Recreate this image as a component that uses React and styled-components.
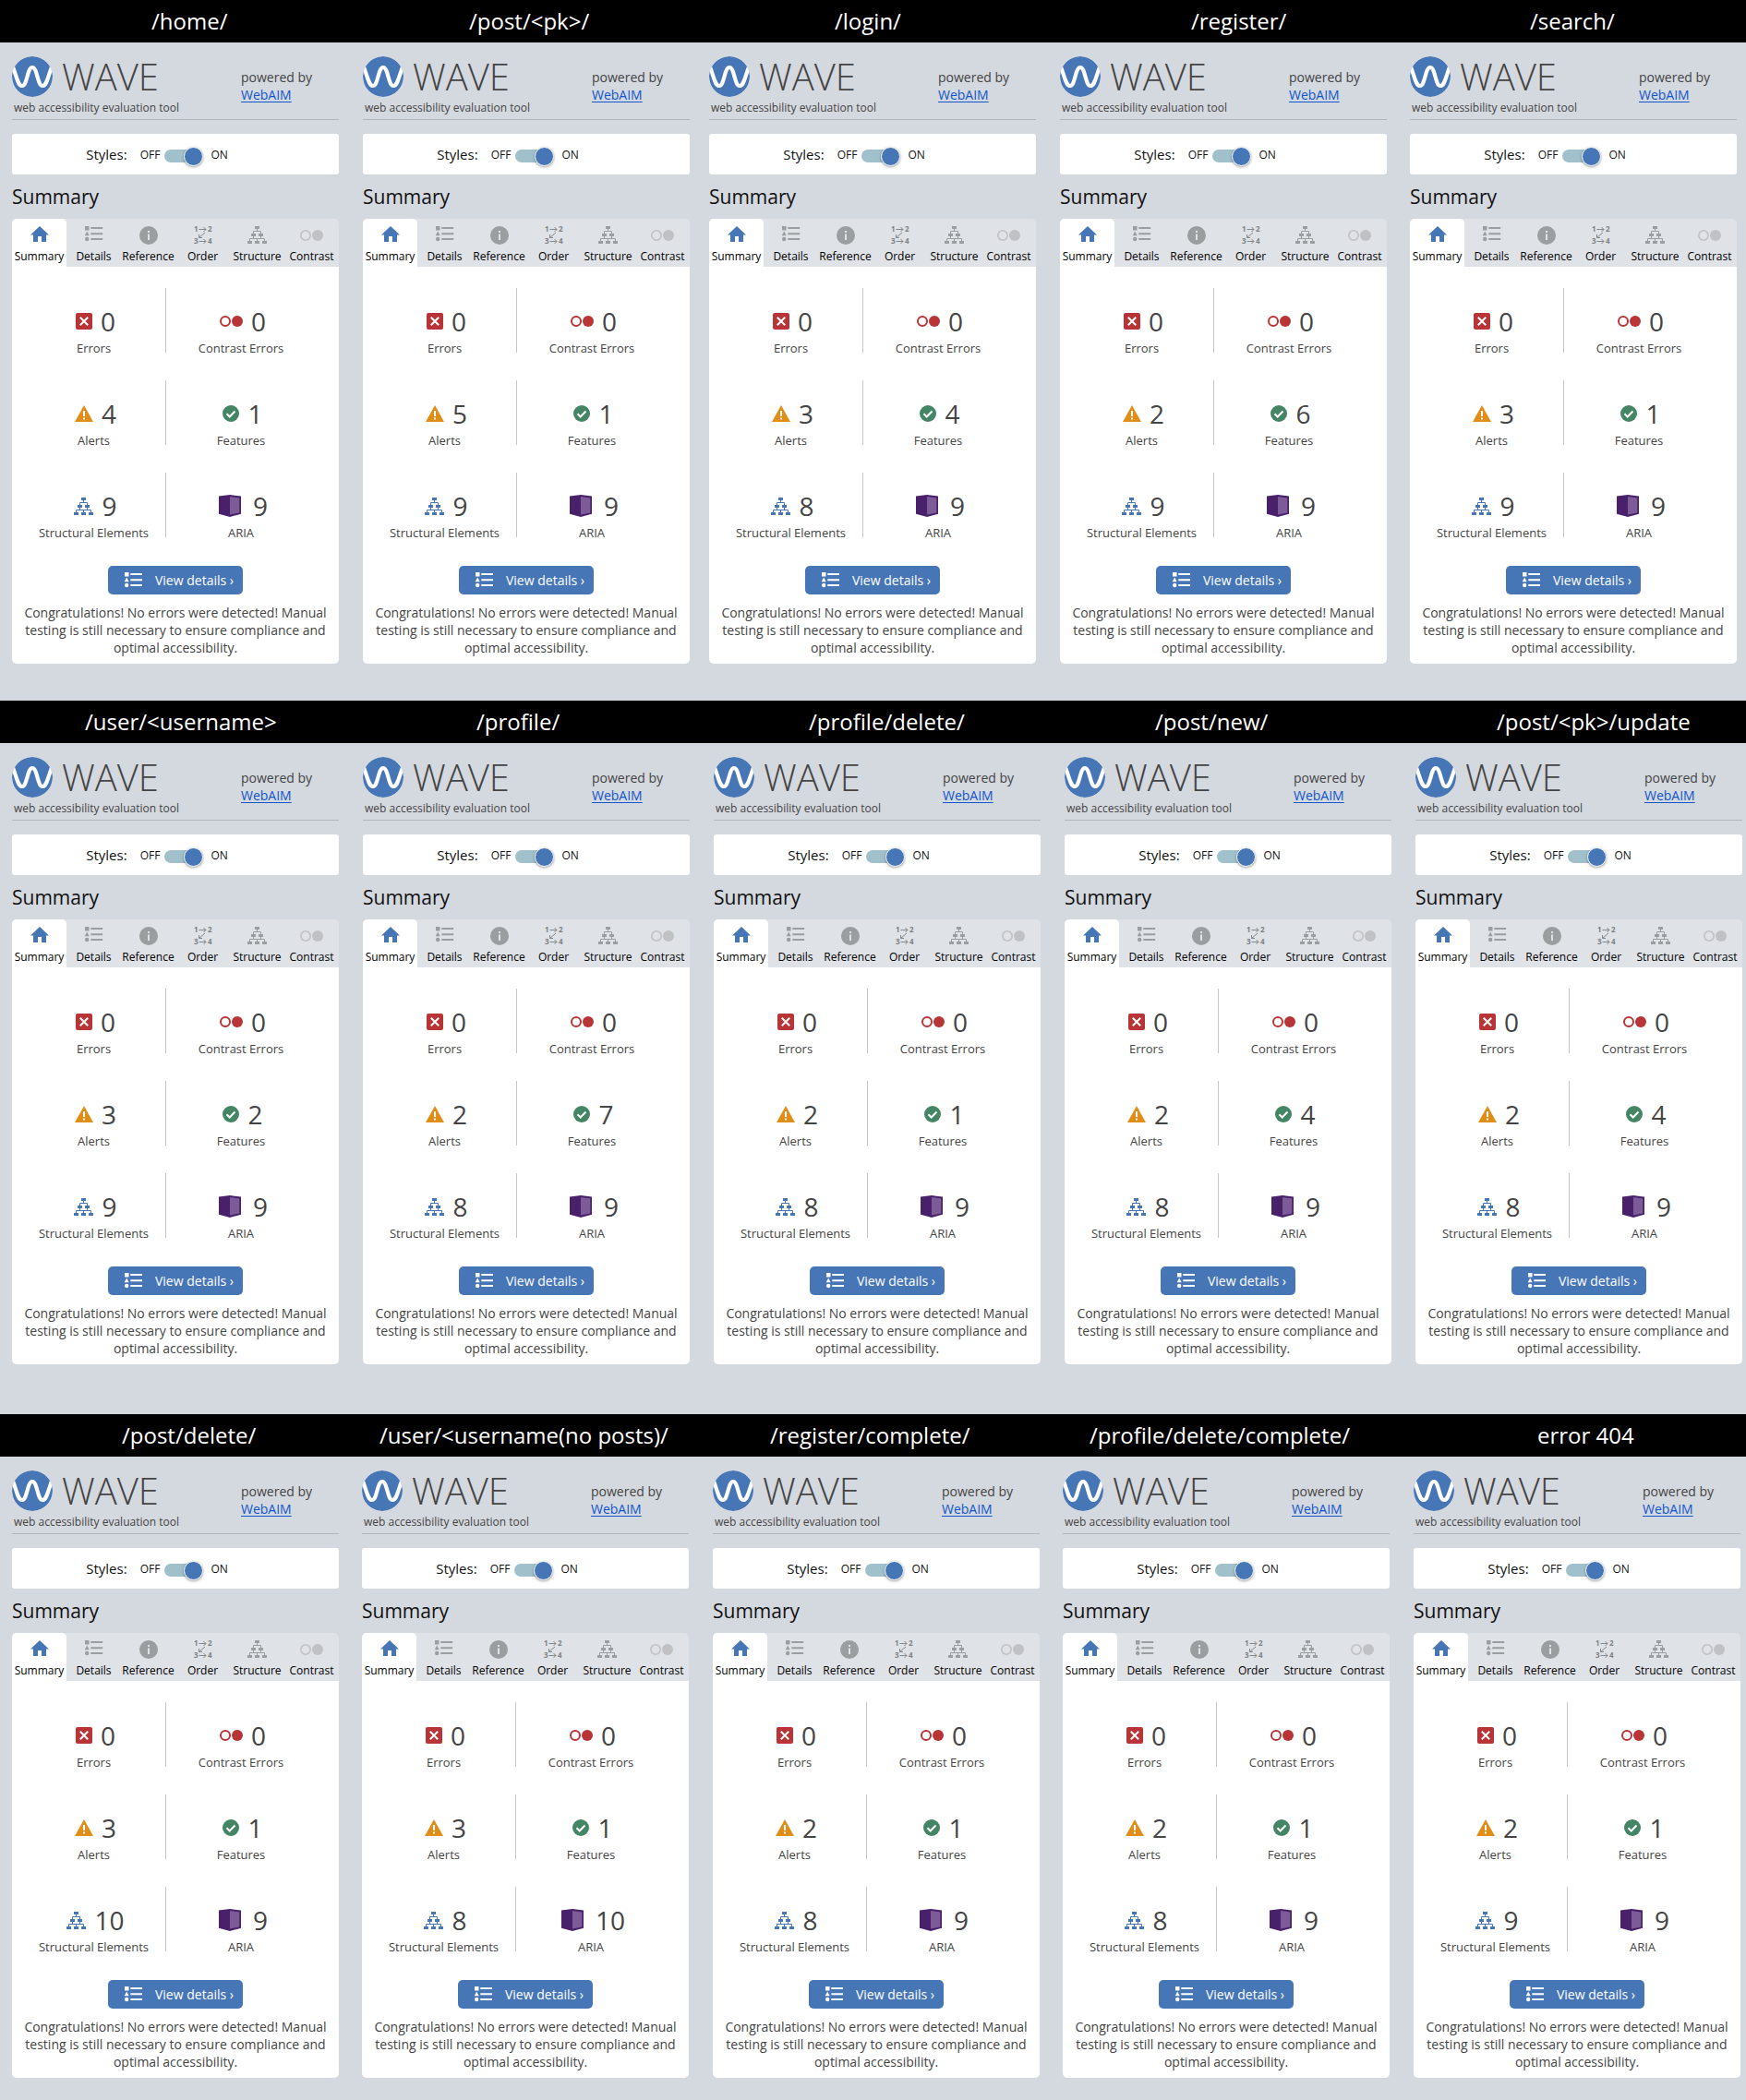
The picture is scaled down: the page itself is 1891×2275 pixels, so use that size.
import React, { useId } from "react";
import styled, { createGlobalStyle, css } from "styled-components";

const color = {
  page: "#d4d8df",
  tabBar: "#dfe2e6",
  blue: "#4776b6",
  text: "#444444",
  grey: "#9b9ea1",
  paleGrey: "#bfc1c5",
  red: "#b93436",
  orange: "#e18e18",
  green: "#438564",
  purple: "#49216b",
  lilac: "#7d5b99",
};

const GlobalStyle = createGlobalStyle`
  *, *::before, *::after { box-sizing: border-box; }
  body {
    margin: 0;
    background: ${color.page};
    color: ${color.text};
    font-family: "Open Sans", "Noto Sans", sans-serif;
  }
`;

/* ---------- layout ---------- */

const Band = styled.section`
  padding-bottom: ${(p) => p.$space}px;
`;

const RouteBar = styled.header`
  display: grid;
  grid-template-columns: ${(p) => p.$tracks.map((t) => `${t}fr`).join(" ")};
  height: 46px;
  background: #000;
`;

const RouteName = styled.h2`
  grid-column: ${(p) => p.$column};
  margin: 0;
  color: #fff;
  font-size: 24px;
  font-weight: 400;
  line-height: 46px;
  white-space: nowrap;
`;

const Strip = styled.div`
  display: flex;
  padding: 15px ${(p) => p.$end}px 0 13px;
`;

const Report = styled.article`
  flex: 1 1 0;
  min-width: 0;
  margin-left: ${(p) => p.$gap}px;
`;

/* ---------- report header ---------- */

const ReportHeader = styled.div`
  display: flex;
  padding-bottom: 4px;
  border-bottom: 1px solid #b3b6b8;
`;

const Brand = styled.div`
  flex: 0 0 248px;
`;

const BrandRow = styled.div`
  display: flex;
  gap: 10px;
  height: 44px;
`;

const BrandName = styled.span`
  font-size: 40px;
  font-weight: 300;
  line-height: 44px;
`;

const Tagline = styled.p`
  margin: 4px 0 0 2px;
  font-size: 12px;
  line-height: 16px;
`;

const Powered = styled.p`
  margin: 13px 0 0;
  font-size: 14px;
  line-height: 19px;
`;

const PoweredLink = styled.a`
  display: block;
  color: #1155cc;
  text-underline-offset: 2px;
`;

/* ---------- styles switch ---------- */

const StylesBar = styled.div`
  display: flex;
  align-items: center;
  justify-content: center;
  height: 44px;
  margin-top: 15px;
  padding-right: 40px;
  border-radius: 3px;
  background: #fff;
  color: #111;
`;

const StylesLabel = styled.label`
  margin-right: 14px;
  font-size: 15px;
`;

const StateText = styled.span`
  font-size: 12px;
`;

const Toggle = styled.input`
  appearance: none;
  display: flex;
  align-items: center;
  justify-content: flex-end;
  width: 42px;
  height: 14px;
  margin: 4px 8px 0 5px;
  border-radius: 7px;
  background: #a0c1cb;

  &::before {
    content: "";
    flex: none;
    width: 21px;
    height: 21px;
    border: 1px solid #fff;
    border-radius: 50%;
    background: ${color.blue};
    box-shadow: 0 1px 3px rgba(0, 0, 0, 0.4);
  }

  &:not(:checked) {
    justify-content: flex-start;
  }
`;

const Heading = styled.h3`
  margin: 10px 0;
  color: #111;
  font-size: 21px;
  font-weight: 400;
  line-height: 28px;
`;

/* ---------- tabs ---------- */

const Tabs = styled.div`
  display: grid;
  grid-template-columns: repeat(6, 1fr);
  height: 52px;
  border-radius: 5px 5px 0 0;
  background: ${color.tabBar};
`;

const Tab = styled.button`
  display: flex;
  flex-direction: column;
  align-items: center;
  gap: 5px;
  min-width: 0;
  padding: 8px 0 0;
  border: 0;
  border-radius: 5px 5px 0 0;
  background: transparent;
  color: #000;
  font: inherit;
  font-size: 12px;
  line-height: 16px;
  ${(p) =>
    p.$active &&
    css`
      background: #fff;
    `}
`;

const TabDrawing = styled.svg`
  flex: none;
  overflow: visible;
`;

const OrderDigits = styled.g`
  font-family: "Open Sans", sans-serif;
  font-size: 8px;
  font-weight: 700;
`;

/* ---------- panel ---------- */

const Panel = styled.div`
  display: flex;
  flex-direction: column;
  align-items: center;
  padding: 23px 0 8px;
  border-radius: 0 0 5px 5px;
  background: #fff;
`;

const Counts = styled.div`
  display: grid;
  grid-template-columns: 167fr 187fr;
  row-gap: 26px;
  width: 100%;
`;

const Count = styled.div`
  padding-top: 17px;
  text-align: center;

  &:nth-child(odd) {
    padding-left: 10px;
    background: linear-gradient(#c6c6c6, #c6c6c6) right top / 1px 70px no-repeat;
  }

  &:nth-child(even) {
    padding-right: 25px;
  }
`;

const CountRow = styled.div`
  display: flex;
  align-items: center;
  justify-content: center;
  gap: 9px;
  height: 38px;
  padding-left: 4px;
`;

const CountValue = styled.span`
  font-size: 28px;
  line-height: 38px;
`;

const CountLabel = styled.div`
  margin-top: 1px;
  font-size: 13px;
  line-height: 18px;
`;

const DetailsButton = styled.button`
  display: flex;
  align-items: center;
  gap: 14px;
  height: 31px;
  margin: 27px 0 10px;
  padding: 0 10px 0 17px;
  border: 0;
  border-radius: 5px;
  background: ${color.blue};
  color: #fff;
  font: inherit;
  font-size: 14px;
  line-height: 19px;
`;

const Message = styled.p`
  margin: 0;
  padding: 0 12px;
  font-size: 14px;
  line-height: 19px;
  text-align: center;
`;

/* ---------- drawings ---------- */

const Logo = () => {
  const clip = useId();
  return (
    <svg width="44" height="44" viewBox="0 0 44 44" aria-hidden="true">
      <clipPath id={clip}>
        <circle cx="22" cy="22" r="22" />
      </clipPath>
      <g clipPath={`url(#${clip})`}>
        <circle cx="22" cy="22" r="22" fill={color.blue} />
        <path
          d="M0 9 C5 21 6 32 11 32 C16.5 32 16.5 12 22 12 C27.5 12 27.5 32 33 32 C38 32 39 21 44 9"
          fill="none"
          stroke="#fff"
          strokeWidth="4.2"
        />
      </g>
    </svg>
  );
};

const TabIcon = ({ children }) => (
  <TabDrawing width="26" height="20" viewBox="0 0 26 20" aria-hidden="true">
    {children}
  </TabDrawing>
);

const ListShape = ({ fill }) => (
  <g fill={fill}>
    <path d="M0 0h4.5v4.5H0zM2.2 5.6l2.5 4.6H-.3z" />
    <circle cx="2.2" cy="14" r="2.2" />
    <path d="M6.3 1h12.9v2H6.3zM6.3 7.2h12.9v2H6.3zM6.3 13h12.9v2H6.3z" />
  </g>
);

const TreeShape = ({ fill }) => (
  <g>
    <path
      d="M8 0h5v3H8zM4 8h5v3H4zM12 8h5v3h-5zM0 16h5v3H0zM8 16h5v3H8zM16 16h5v3h-5z"
      fill={fill}
    />
    <path
      d="M10.5 3v3M6.5 8V5.5h8V8M6.5 11v2.5M14.5 11v2.5M2.5 16v-2.5h16V16M10.5 13.5V16"
      fill="none"
      stroke={fill}
    />
  </g>
);

const CirclesShape = ({ fill, thick }) => (
  <g>
    <circle cx="6" cy="6" r={6 - thick / 2} fill="none" stroke={fill} strokeWidth={thick} />
    <circle cx="19" cy="6" r="6" fill={fill} />
  </g>
);

const tabs = [
  {
    name: "Summary",
    icon: <path d="M13 0l10 9.6h-3V17h-5v-6h-4v6H6V9.6H3z" fill={color.blue} />,
  },
  {
    name: "Details",
    icon: (
      <g transform="translate(3 0)">
        <ListShape fill={color.grey} />
      </g>
    ),
  },
  {
    name: "Reference",
    icon: (
      <g>
        <circle cx="13" cy="10" r="10" fill={color.grey} />
        <path d="M12 5h2v2h-2zM12 8.5h2V15h-2z" fill={color.tabBar} />
      </g>
    ),
  },
  {
    name: "Order",
    icon: (
      <OrderDigits fill="#7d8083">
        <text x="3" y="6">1</text>
        <text x="18" y="6">2</text>
        <text x="3" y="19">3</text>
        <text x="18" y="19">4</text>
        <path
          d="M8.500 3.500h7.500M13.500 1l2.500 2.500L13.500 6M8.500 16.500h7.500M13.500 14l2.500 2.500L13.500 19M15 7l-6.500 5.500M8.500 9v3.500H12"
          fill="none"
          stroke="#85888b"
        />
      </OrderDigits>
    ),
  },
  {
    name: "Structure",
    icon: (
      <g transform="translate(2 0)">
        <TreeShape fill={color.grey} />
      </g>
    ),
  },
  {
    name: "Contrast",
    icon: (
      <g transform="translate(0 4)">
        <CirclesShape fill={color.paleGrey} thick={1.6} />
      </g>
    ),
  },
];

const ErrorIcon = () => (
  <svg width="18" height="18" viewBox="0 0 18 18" aria-hidden="true">
    <rect width="18" height="18" rx="2" fill={color.red} />
    <path d="M4.8 4.8l8.4 8.4M13.2 4.8l-8.4 8.4" stroke="#fff" strokeWidth="2" />
  </svg>
);

const ContrastIcon = () => (
  <svg width="25" height="12" viewBox="0 0 25 12" aria-hidden="true">
    <CirclesShape fill={color.red} thick={2} />
  </svg>
);

const AlertIcon = () => (
  <svg width="20" height="18" viewBox="0 0 20 18" aria-hidden="true">
    <path d="M10 0l10 18H0z" fill={color.orange} />
    <path d="M9 6h2v6H9zM9 13.5h2v2H9z" fill="#fff" />
  </svg>
);

const FeatureIcon = () => (
  <svg width="18" height="18" viewBox="0 0 18 18" aria-hidden="true">
    <circle cx="9" cy="9" r="9" fill={color.green} />
    <path d="M4.5 9.3l3.2 3.2 5.8-6" fill="none" stroke="#fff" strokeWidth="2" />
  </svg>
);

const StructureIcon = () => (
  <svg width="21" height="19" viewBox="0 0 21 19" aria-hidden="true">
    <TreeShape fill={color.blue} />
  </svg>
);

const AriaIcon = () => (
  <svg width="29" height="24" viewBox="-1 0 29 24" aria-hidden="true">
    <path d="M0 1.5L12 0l12 1.5v19.2L12 24 0 20.7z" fill={color.purple} />
    <path d="M12 2l10.3 1.4v16L12 21.6z" fill={color.lilac} />
  </svg>
);

const categories = [
  { label: "Errors", Icon: ErrorIcon },
  { label: "Contrast Errors", Icon: ContrastIcon },
  { label: "Alerts", Icon: AlertIcon },
  { label: "Features", Icon: FeatureIcon },
  { label: "Structural Elements", Icon: StructureIcon },
  { label: "ARIA", Icon: AriaIcon },
];

/* ---------- data ---------- */

const bands = [
  {
    space: 40,
    end: 10,
    tracks: [164, 344, 396, 386, 367, 234],
    reports: [
      { route: "/home/", gap: 0, counts: [0, 0, 4, 1, 9, 9] },
      { route: "/post/<pk>/", gap: 26, counts: [0, 0, 5, 1, 9, 9] },
      { route: "/login/", gap: 21, counts: [0, 0, 3, 4, 8, 9] },
      { route: "/register/", gap: 26, counts: [0, 0, 2, 6, 9, 9] },
      { route: "/search/", gap: 25, counts: [0, 0, 3, 1, 9, 9] },
    ],
  },
  {
    space: 54,
    end: 4,
    tracks: [92, 424, 360, 375, 370, 270],
    reports: [
      { route: "/user/<username>", gap: 0, counts: [0, 0, 3, 2, 9, 9] },
      { route: "/profile/", gap: 26, counts: [0, 0, 2, 7, 8, 9] },
      { route: "/profile/delete/", gap: 26, counts: [0, 0, 2, 1, 8, 9] },
      { route: "/post/new/", gap: 26, counts: [0, 0, 2, 4, 8, 9] },
      { route: "/post/<pk>/update", gap: 26, counts: [0, 0, 2, 4, 8, 9] },
    ],
  },
  {
    space: 24,
    end: 6,
    tracks: [132, 279, 423, 346, 485, 226],
    reports: [
      { route: "/post/delete/", gap: 0, counts: [0, 0, 3, 1, 10, 9] },
      { route: "/user/<username(no posts)/", gap: 25, counts: [0, 0, 3, 1, 8, 10] },
      { route: "/register/complete/", gap: 26, counts: [0, 0, 2, 1, 8, 9] },
      { route: "/profile/delete/complete/", gap: 25, counts: [0, 0, 2, 1, 8, 9] },
      { route: "error 404", gap: 26, counts: [0, 0, 2, 1, 9, 9] },
    ],
  },
];

function WaveReport({ gap, counts }) {
  const toggleId = useId();
  return (
    <Report $gap={gap}>
      <ReportHeader>
        <Brand>
          <BrandRow>
            <Logo />
            <BrandName>WAVE</BrandName>
          </BrandRow>
          <Tagline>web accessibility evaluation tool</Tagline>
        </Brand>
        <Powered>
          powered by
          <PoweredLink href="#webaim">WebAIM</PoweredLink>
        </Powered>
      </ReportHeader>
      <StylesBar>
        <StylesLabel htmlFor={toggleId}>Styles:</StylesLabel>
        <StateText>OFF</StateText>
        <Toggle id={toggleId} type="checkbox" defaultChecked />
        <StateText>ON</StateText>
      </StylesBar>
      <Heading>Summary</Heading>
      <Tabs role="tablist">
        {tabs.map((tab, i) => (
          <Tab key={tab.name} type="button" role="tab" aria-selected={i === 0} $active={i === 0}>
            <TabIcon>{tab.icon}</TabIcon>
            {tab.name}
          </Tab>
        ))}
      </Tabs>
      <Panel>
        <Counts>
          {categories.map(({ label, Icon }, i) => (
            <Count key={label}>
              <CountRow>
                <Icon />
                <CountValue>{counts[i]}</CountValue>
              </CountRow>
              <CountLabel>{label}</CountLabel>
            </Count>
          ))}
        </Counts>
        <DetailsButton type="button">
          <svg width="20" height="17" viewBox="-1 0 20 17" aria-hidden="true">
            <ListShape fill="#fff" />
          </svg>
          View details ›
        </DetailsButton>
        <Message>
          Congratulations! No errors were detected! Manual testing is still necessary to ensure
          compliance and optimal accessibility.
        </Message>
      </Panel>
    </Report>
  );
}

export default function App() {
  return (
    <main>
      <GlobalStyle />
      {bands.map((band) => (
        <Band key={band.reports[0].route} $space={band.space}>
          <RouteBar $tracks={band.tracks}>
            {band.reports.map((report, i) => (
              <RouteName key={report.route} $column={i + 2}>
                {report.route}
              </RouteName>
            ))}
          </RouteBar>
          <Strip $end={band.end}>
            {band.reports.map((report) => (
              <WaveReport key={report.route} gap={report.gap} counts={report.counts} />
            ))}
          </Strip>
        </Band>
      ))}
    </main>
  );
}
